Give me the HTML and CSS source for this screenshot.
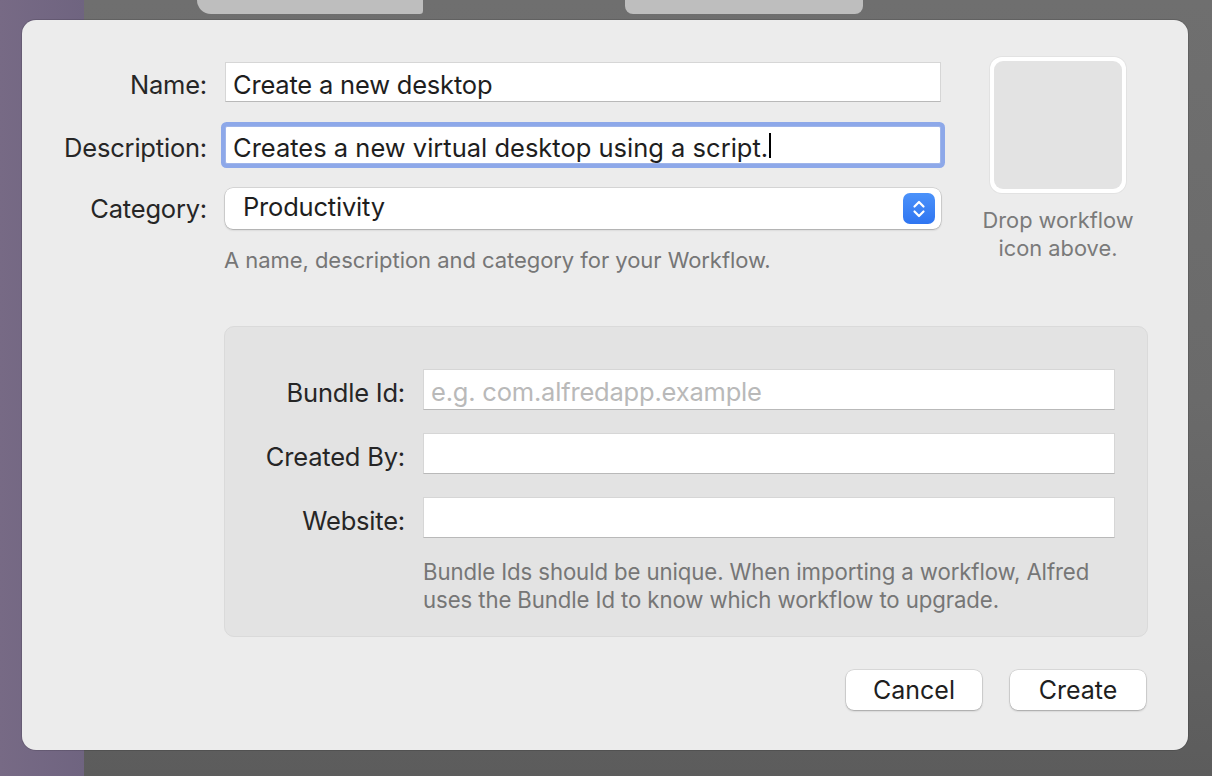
FILE: index.html
```html
<!DOCTYPE html>
<html>
<head>
<meta charset="utf-8">
<link rel="stylesheet" href="styles.css">
</head>
<body>
<div class="backdrop">
  <div class="behind">
    <div class="tab tab-a"></div>
    <div class="tab tab-b"></div>
  </div>
  <div class="dialog">
    <div class="top">
      <div class="form">
        <div class="row">
          <label class="lbl">Name:</label>
          <div class="field">Create a new desktop</div>
        </div>
        <div class="row">
          <label class="lbl">Description:</label>
          <div class="field focused"><span>Creates a new virtual desktop using a script.</span><span class="caret"></span></div>
        </div>
        <div class="row">
          <label class="lbl lbl-popup">Category:</label>
          <div class="popup">
            <span class="popup-text">Productivity</span>
            <span class="stepper">
              <svg width="16" height="22" viewBox="0 0 16 22"><path d="M3.5 8.5 L8 4 L12.5 8.5 M3.5 13.5 L8 18 L12.5 13.5" fill="none" stroke="#fff" stroke-width="2.2" stroke-linecap="round" stroke-linejoin="round"/></svg>
            </span>
          </div>
        </div>
        <p class="hint">A name, description and category for your Workflow.</p>
      </div>
      <div class="iconcol">
        <div class="well"><div class="well-inner"></div></div>
        <p class="drop">Drop workflow<br>icon above.</p>
      </div>
    </div>

    <div class="group">
      <div class="grow">
        <label class="lbl">Bundle Id:</label>
        <div class="field placeholder">e.g. com.alfredapp.example</div>
      </div>
      <div class="grow">
        <label class="lbl">Created By:</label>
        <div class="field"></div>
      </div>
      <div class="grow">
        <label class="lbl">Website:</label>
        <div class="field"></div>
      </div>
      <p class="ghint">Bundle Ids should be unique. When importing a workflow, Alfred<br>uses the Bundle Id to know which workflow to upgrade.</p>
    </div>

    <div class="buttons">
      <button class="btn">Cancel</button>
      <button class="btn">Create</button>
    </div>
  </div>
</div>
</body>
</html>
```

FILE: styles.css
```css
* { box-sizing: border-box; }
html, body { margin: 0; padding: 0; }
body {
  width: 1212px;
  height: 776px;
  overflow: hidden;
  font-family: Inter, "Noto Sans", "Liberation Sans", sans-serif;
  background:
    linear-gradient(to right, #776a85 0, #6f6480 84px, transparent 84px),
    linear-gradient(to bottom, #6f6f6f 0, #6a6a6a 400px, #5c5c5c 776px);
}
.backdrop { width: 1212px; height: 776px; }
.behind {
  height: 20px;
  display: flex;
  padding-left: 197px;
}
.tab {
  height: 14px;
  background: #bebebe;
}
.tab-a {
  width: 226px;
  border-radius: 0 0 8px 34px;
}
.tab-b {
  width: 238px;
  margin-left: 202px;
  border-radius: 0 0 8px 8px;
}
.dialog {
  margin-left: 22px;
  width: 1166px;
  height: 730px;
  background: #ececec;
  border-radius: 14px;
  box-shadow: 0 0 0 1px rgba(0,0,0,0.12);
  padding: 42px 40px 40px 0;
  display: flex;
  flex-direction: column;
}
.top {
  display: flex;
  height: 264px;
}
.form {
  width: 919px;
  display: flex;
  flex-direction: column;
  gap: 23px;
}
.row {
  display: grid;
  grid-template-columns: 185px 716px;
  column-gap: 18px;
  align-items: center;
  height: 40px;
}
.lbl {
  text-align: right;
  font-size: 25.5px;
  color: #262626;
  letter-spacing: -0.2px;
  white-space: nowrap;
  padding-top: 5px;
}
.lbl.lbl-popup { padding-top: 0; }
.field {
  height: 40px;
  background: #fff;
  border: 1px solid #d6d6d6;
  border-bottom-color: #b9b9b9;
  font-size: 25.5px;
  color: #1e1e1e;
  padding: 4px 7px 0;
  display: flex;
  align-items: center;
  white-space: nowrap;
  letter-spacing: -0.2px;
}
.field.focused {
  border: 1px solid #9fb5ea;
  box-shadow: 0 0 0 4px #8da8e9;
  border-radius: 2px;
  height: 38px;
  margin: 1px 0;
  letter-spacing: 0;
}
.caret {
  display: inline-block;
  width: 2px;
  height: 25px;
  background: #000;
  margin-left: 1px;
  margin-top: -3px;
}
.field.placeholder { color: #b9b9b9; }
.popup {
  height: 41px;
  background: #fff;
  border-radius: 8px;
  box-shadow: 0 0 0 0.5px rgba(0,0,0,0.18), 0 1px 2px rgba(0,0,0,0.22);
  display: flex;
  align-items: center;
  justify-content: space-between;
  padding: 0 6px 0 18px;
}
.popup-text {
  font-size: 25.5px;
  color: #1e1e1e;
  letter-spacing: -0.2px;
  margin-top: -5px;
}
.stepper {
  width: 32px;
  height: 31px;
  border-radius: 7px;
  background: linear-gradient(to bottom, #4b92fa, #2f75f1);
  display: flex;
  align-items: center;
  justify-content: center;
}
.hint {
  margin: -4px 0 0 202px;
  font-size: 22px;
  color: #767676;
  letter-spacing: -0.05px;
}
.iconcol {
  margin-left: 49px;
  margin-top: -5px;
  width: 136px;
  display: flex;
  flex-direction: column;
  align-items: center;
}
.well {
  width: 136px;
  height: 136px;
  background: #fff;
  border-radius: 12px;
  padding: 4px;
  box-shadow: 0 0 0 1px rgba(0,0,0,0.04);
}
.well-inner {
  width: 100%;
  height: 100%;
  background: #e3e3e3;
  border-radius: 9px;
}
.drop {
  margin: 13px -40px 0;
  text-align: center;
  font-size: 21.8px;
  line-height: 28px;
  color: #7a7a7a;
}
.group {
  margin-left: 202px;
  width: 924px;
  height: 311px;
  background: #e3e3e3;
  border: 1px solid #dadada;
  border-radius: 10px;
  padding: 42px 32px 0 0;
  display: flex;
  flex-direction: column;
  gap: 23px;
}
.grow {
  display: grid;
  grid-template-columns: 180px 692px;
  column-gap: 18px;
  align-items: center;
  height: 41px;
}
.grow .field { height: 41px; }
.ghint {
  margin: -3px 0 0 198px;
  font-size: 22.2px;
  line-height: 28px;
  color: #767676;
  letter-spacing: -0.1px;
}
.buttons {
  margin-top: 33px;
  display: flex;
  justify-content: flex-end;
  gap: 28px;
  padding-right: 2px;
}
.btn {
  width: 136px;
  height: 40px;
  border: none;
  border-radius: 8px;
  background: #fff;
  box-shadow: 0 0 0 0.5px rgba(0,0,0,0.15), 0 1px 2px rgba(0,0,0,0.25);
  font-family: Inter, "Noto Sans", "Liberation Sans", sans-serif;
  font-size: 25px;
  color: #1e1e1e;
  padding: 0;
}
```
